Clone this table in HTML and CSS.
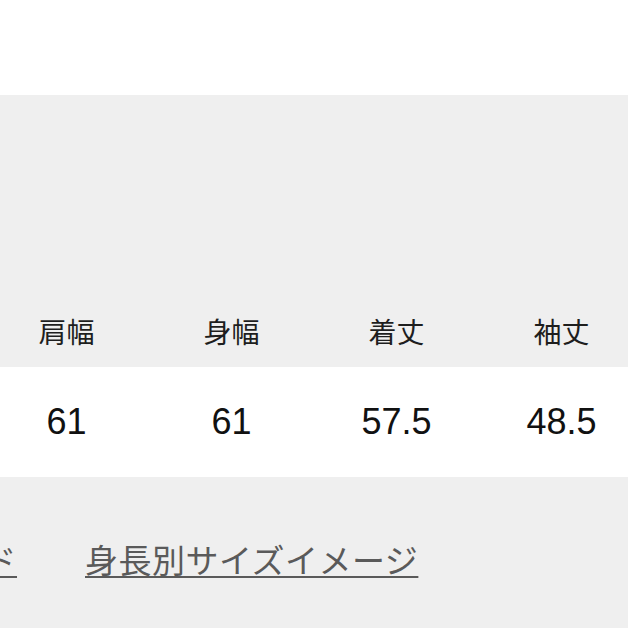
FILE: index.html
```html
<!DOCTYPE html>
<html lang="ja">
<head>
<meta charset="utf-8">
<link rel="stylesheet" href="styles.css">
</head>
<body>
<div class="top"></div>
<div class="section">
  <div class="grid head">
    <div class="cell">肩幅</div>
    <div class="cell">身幅</div>
    <div class="cell">着丈</div>
    <div class="cell">袖丈</div>
  </div>
  <div class="grid values">
    <div class="cell">61</div>
    <div class="cell">61</div>
    <div class="cell">57.5</div>
    <div class="cell">48.5</div>
  </div>
  <div class="links">
    <a class="link first" href="#">サイズガイド</a>
    <a class="link" href="#">身長別サイズイメージ</a>
  </div>
</div>
</body>
</html>
```
FILE: styles.css
```css
html, body {
  margin: 0;
  padding: 0;
  background: #efefef;
  overflow: hidden;
  width: 628px;
  height: 628px;
}
.top {
  height: 95px;
  background: #ffffff;
}
.section {
  background: #efefef;
  padding-top: 200px;
  height: 333px;
}
.grid {
  display: grid;
  grid-template-columns: repeat(4, 165px);
  width: 660px;
  margin-left: -16px;
}
.cell {
  display: flex;
  align-items: center;
  justify-content: center;
}
.head {
  height: 72px;
  font-family: "Noto Sans CJK JP", sans-serif;
  font-size: 28px;
  color: #1e1e1e;
}
.values {
  height: 110px;
  background: #ffffff;
  font-family: "Liberation Sans", Arial, sans-serif;
  font-size: 36px;
  color: #111;
}
.links {
  display: flex;
  gap: 68px;
  padding-top: 62px;
  margin-left: -183px;
  white-space: nowrap;
}
.link {
  font-family: "Noto Sans CJK JP", sans-serif;
  font-size: 33px;
  letter-spacing: 0.5px;
  line-height: 40px;
  color: #5a5a5a;
  text-decoration: underline;
  text-decoration-thickness: 2px;
  text-underline-offset: 3px;
}
```
